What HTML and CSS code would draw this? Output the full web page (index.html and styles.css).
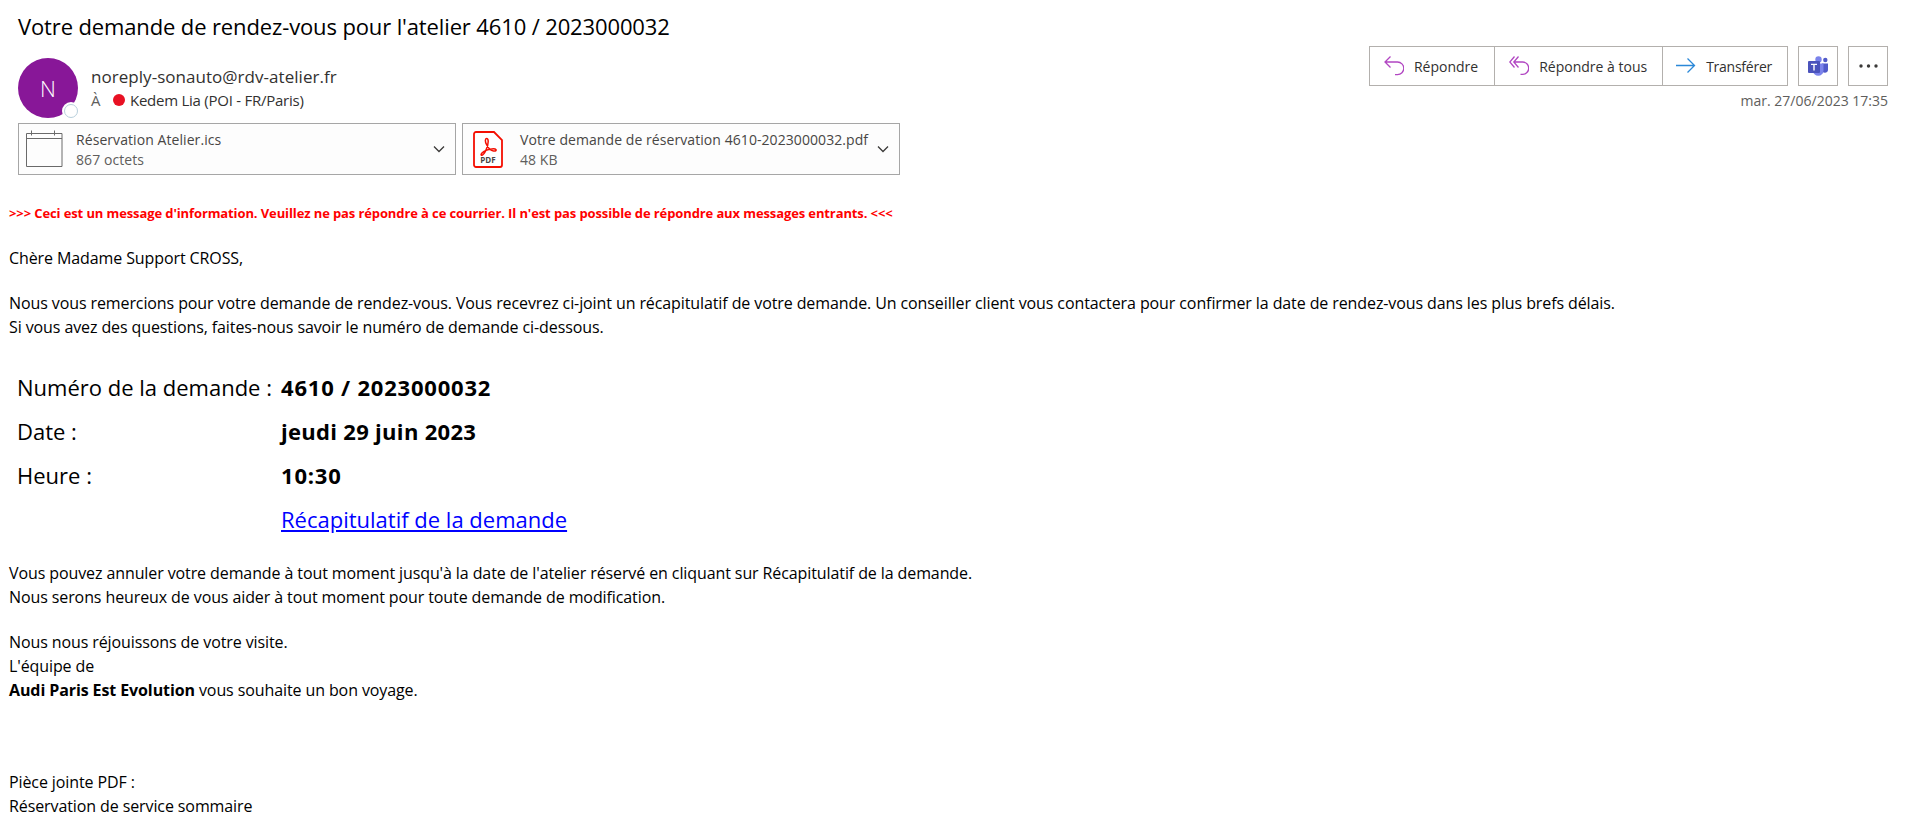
FILE: index.html
```html
<!DOCTYPE html>
<html lang="fr">
<head>
    <meta charset="UTF-8">
    <title>Votre demande de rendez-vous</title>
    <link rel="stylesheet" href="styles.css">
</head>
<body>

    <div class="mail-header">
        <h1 class="subject">Votre demande de rendez-vous pour l'atelier 4610 / 2023000032</h1>

        <div class="meta-row">
            <div class="sender">
                <div class="avatar">N<span class="presence"></span></div>
                <div class="sender-text">
                    <div class="from">noreply-sonauto@rdv-atelier.fr</div>
                    <div class="to"><span class="to-label">À</span><span class="red-dot"></span>Kedem Lia (POI - FR/Paris)</div>
                </div>
            </div>
            <div class="actions">
                <div class="toolbar">
                    <div class="btn-group">
                        <button class="btn btn-reply">
                            <svg width="20" height="20" viewBox="0 0 20 20" fill="none" stroke="#b146c2" stroke-width="1.3"><path d="M6.500.5 1 6l5.500 5.500M1 6h12.500a6.300 6.300 0 0 1 0 12.600H11"/></svg>
                            Répondre
                        </button>
                        <button class="btn btn-reply-all">
                            <svg width="20" height="20" viewBox="0 0 20 20" fill="none" stroke="#b146c2" stroke-width="1.3"><path d="M5.500.5 .8 6l4.700 5.500M9.500.5 4.800 6l4.700 5.500M4.800 6h8.700a6.100 6.100 0 0 1 0 12.400H11.500"/></svg>
                            Répondre à tous
                        </button>
                        <button class="btn btn-forward">
                            <svg width="20" height="20" viewBox="0 0 20 20" fill="none" stroke="#2b88d8" stroke-width="1.3"><path d="M0 9.500h18.500M11.500 2.500l7 7-7 7"/></svg>
                            Transférer
                        </button>
                    </div>
                    <button class="btn-icon">
                        <svg width="20" height="20" viewBox="0 0 20 20"><circle cx="17.300" cy="4" r="2.200" fill="#5059c9"/><path d="M14 7.500h6v6a3 3 0 0 1-6 .5z" fill="#5059c9"/><circle cx="10.500" cy="3.500" r="3.200" fill="#7b83eb"/><path d="M5 7.500h10.500v7a5.200 5.200 0 0 1-10.500 0z" fill="#7b83eb"/><rect x="0" y="5" width="12" height="12" rx="1" fill="#4b53bc"/><path d="M3 7.800h6v1.300H6.700v5.400H5.300V9.100H3z" fill="#fff"/></svg>
                    </button>
                    <button class="btn-icon">
                        <svg width="19" height="4" viewBox="0 0 19 4" fill="#3b3a39"><circle cx="2" cy="2" r="1.700"/><circle cx="9.500" cy="2" r="1.700"/><circle cx="17" cy="2" r="1.700"/></svg>
                    </button>
                </div>
                <div class="date">mar. 27/06/2023 17:35</div>
            </div>
        </div>

        <div class="attachments">
            <div class="attachment attachment-ics">
                <svg class="file-icon" width="37" height="38" viewBox="0 0 37 38" fill="none" stroke="#6a6a6a"><path d="M.5 3.500h35.500v33H.5zM.5 8.500h35.500M5.500.5v5M28.500.5v5"/></svg>
                <div class="file-text">
                    <div class="file-name">Réservation Atelier.ics</div>
                    <div class="file-size">867 octets</div>
                </div>
                <svg class="chevron" width="12" height="8" viewBox="0 0 12 8" fill="none" stroke="#3b3a39" stroke-width="1.300"><path d="M1 1.500 6 6.500 11 1.500"/></svg>
            </div>
            <div class="attachment attachment-pdf">
                <svg class="file-icon" width="30" height="37" viewBox="0 0 30 37" fill="none">
                    <path d="M3 1h18l8 8v25a2 2 0 0 1-2 2H3a2 2 0 0 1-2-2V3a2 2 0 0 1 2-2z" stroke="#f40f02" stroke-width="1.800" fill="#fff"/>
                    <path d="M13.500 7.500c-1.500 0-1.500 3 0 6s4 6 7 6.500c2 .3 3-.5 2.500-1.300s-2-1-4-.8c-4 .4-8 1.800-10 4-1 1.200-1.300 2-.5 2.300 1 .3 2.500-1.200 4-4s2.700-6.500 2.700-9.700c0-2-.7-3-1.700-3z" stroke="#f40f02" stroke-width="1.500"/>
                    <text class="pdf-label" x="15" y="32" text-anchor="middle">PDF</text>
                </svg>
                <div class="file-text">
                    <div class="file-name">Votre demande de réservation 4610-2023000032.pdf</div>
                    <div class="file-size">48 KB</div>
                </div>
                <svg class="chevron" width="12" height="8" viewBox="0 0 12 8" fill="none" stroke="#3b3a39" stroke-width="1.300"><path d="M1 1.500 6 6.500 11 1.500"/></svg>
            </div>
        </div>
    </div>

    <div class="mail-body">
        <p class="warning">&gt;&gt;&gt; Ceci est un message d'information. Veuillez ne pas répondre à ce courrier. Il n'est pas possible de répondre aux messages entrants. &lt;&lt;&lt;</p>

        <p>Chère Madame Support CROSS,</p>

        <p>Nous vous remercions pour votre demande de rendez-vous. Vous recevrez ci-joint un récapitulatif de votre demande. Un conseiller client vous contactera pour confirmer la date de rendez-vous dans les plus brefs délais.<br>
        Si vous avez des questions, faites-nous savoir le numéro de demande ci-dessous.</p>

        <table class="summary">
            <tr><td class="label">Numéro de la demande :</td><td class="value value-num">4610 / 2023000032</td></tr>
            <tr><td class="label">Date :</td><td class="value">jeudi 29 juin 2023</td></tr>
            <tr><td class="label">Heure :</td><td class="value value-num">10:30</td></tr>
            <tr><td></td><td><a href="#">Récapitulatif de la demande</a></td></tr>
        </table>

        <p>Vous pouvez annuler votre demande à tout moment jusqu'à la date de l'atelier réservé en cliquant sur Récapitulatif de la demande.<br>
        Nous serons heureux de vous aider à tout moment pour toute demande de modification.</p>

        <p>Nous nous réjouissons de votre visite.<br>
        L'équipe de<br>
        <b>Audi Paris Est Evolution</b> vous souhaite un bon voyage.</p>

        <p class="footer-note">Pièce jointe PDF :<br>
        Réservation de service sommaire</p>
    </div>

</body>
</html>
```

FILE: styles.css
```css
body { margin: 0; font-family: "Open Sans", "Noto Sans", sans-serif; color: #000; background: #fff; overflow: hidden; }

.mail-header { padding: 11px 20px 0 18px; }
.subject { margin: 0; font-size: 22px; font-weight: 400; line-height: 30px; letter-spacing: -0.13px; }

.meta-row { display: flex; justify-content: space-between; margin-top: 5px; height: 77px; }
.sender { display: flex; }
.avatar {
    position: relative;
    width: 60px;
    height: 60px;
    margin-top: 12px;
    border-radius: 50%;
    background-color: #881798;
    color: #fff;
    font-size: 22px;
    font-weight: 300;
    line-height: 60px;
    text-align: center;
}
.presence {
    position: absolute;
    right: 0;
    bottom: 0;
    width: 12px;
    height: 12px;
    border: 1.500px solid #b8cfdc;
    border-radius: 50%;
    background: #fff;
    box-shadow: 0 0 0 2px #fff;
}
.sender-text { margin-left: 13px; margin-top: 18px; color: #323130; }
.from { font-size: 17px; line-height: 25px; letter-spacing: 0.04px; }
.to { display: flex; align-items: center; font-size: 15px; line-height: 22px; letter-spacing: -0.25px; }
.to-label { width: 22px; color: #605e5c; }
.red-dot { width: 12px; height: 12px; border-radius: 50%; background: #e81123; margin-right: 5px; }

.actions { display: flex; flex-direction: column; align-items: flex-end; }
.toolbar { display: flex; gap: 10px; }
.btn-group { display: flex; border: 1px solid #b3b0ad; height: 40px; box-sizing: border-box; }
.btn {
    display: flex;
    align-items: center;
    gap: 10px;
    padding: 0 15px 0 14px;
    border: 0;
    border-right: 1px solid #b3b0ad;
    background: #fff;
    color: #323130;
    font-family: inherit;
    font-size: 14px;
}
.btn-reply { padding-right: 16px; }
.btn-forward { padding-left: 13px; letter-spacing: -0.25px; }
.btn:last-child { border-right: 0; }
.btn-icon {
    display: flex;
    align-items: center;
    justify-content: center;
    width: 40px;
    height: 40px;
    padding: 0;
    border: 1px solid #b3b0ad;
    background: #fff;
}
.date { margin-top: 5px; color: #605e5c; font-size: 14px; line-height: 20px; }

.attachments { display: flex; gap: 6px; }
.attachment {
    display: flex;
    align-items: center;
    width: 438px;
    height: 52px;
    box-sizing: border-box;
    border: 1px solid #a6a6a6;
    background: #fdfdfd;
    color: #484644;
}
.file-icon { flex: none; margin-left: 7px; }
.attachment-pdf .file-icon { margin-left: 10px; }
.file-text { flex: 1; margin-left: 13px; padding-top: 1px; font-size: 14px; line-height: 20px; letter-spacing: 0.07px; }
.attachment-pdf .file-text { margin-left: 17px; }
.file-size { color: #605e5c; }
.chevron { flex: none; margin-right: 10px; }
.pdf-label { fill: #484644; font-size: 8px; font-weight: 700; }

.mail-body { padding: 0 9px; font-size: 16px; line-height: 24px; letter-spacing: -0.1px; }
.mail-body p { margin: 0 0 21px; }
.mail-body .warning { margin-top: 28px; margin-bottom: 23px; color: #ff0000; font-size: 13px; font-weight: 700; line-height: 20px; letter-spacing: -0.11px; }
.summary { border-collapse: collapse; margin: 26px 0 20px 8px; font-size: 22px; letter-spacing: 0; }
.summary td { padding: 0; height: 44px; }
.summary .label { width: 264px; }
.summary .value { font-weight: 700; letter-spacing: 0.3px; }
.summary .value-num { letter-spacing: 0.8px; }
.summary a { color: #0000ff; }
.mail-body .footer-note { margin-top: 68px; }
```
